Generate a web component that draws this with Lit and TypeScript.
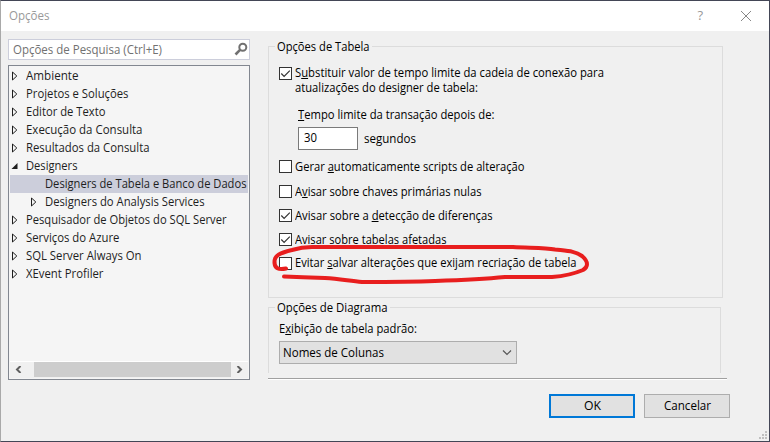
import { LitElement, html, css, svg, nothing } from "lit";
import { customElement, property, state } from "lit/decorators.js";
import { styleMap } from "lit/directives/style-map.js";

/** A single line of text condensed to a given advance width. */
@customElement("ui-label")
class UiLabel extends LitElement {
  @property() text = "";
  @property({ type: Number }) fit = 0;
  @state() private ratio = 1;
  static styles = css`
    :host { display: block; white-space: pre; }
    .run { display: inline-block; vertical-align: top; transform-origin: 0 0; }
    .key { text-decoration: underline; text-underline-offset: 1px; text-decoration-thickness: 1px; text-decoration-skip-ink: none; }
  `;
  firstUpdated() {
    const run = this.renderRoot.querySelector(".run") as HTMLElement;
    this.ratio = this.fit / run.getBoundingClientRect().width;
  }
  render() {
    const at = this.text.indexOf("_");
    const parts = at < 0 ? this.text : html`${this.text.slice(0, at)}<span class="key">${this.text[at + 1]}</span>${this.text.slice(at + 2)}`;
    return html`<span class="run" style=${styleMap({ transform: `scaleX(${this.ratio})` })}>${parts}</span>`;
  }
  updated() {
    this.style.width = this.fit + "px";
  }
}

@customElement("ui-check")
class UiCheck extends LitElement {
  @property() text = "";
  @property({ type: Number }) fit = 0;
  @property({ type: Boolean }) checked = false;
  @property({ type: Boolean }) raised = false;
  static styles = css`
    :host { display: flex; gap: 3px; height: 15px; }
    .box { box-sizing: border-box; flex: none; width: 13px; height: 13px; border: 1px solid #333; background: #fff; margin-top: 1px; }
    .raised { margin-top: -1px; }
    svg { display: block; }
  `;
  render() {
    return html`<span class="box">${this.checked
      ? html`<svg width="11" height="11" viewBox="0 0 11 11"><path d="M1.3 5.5 4.1 8.3 9.8 2.6" fill="none" stroke="#333" stroke-width="1.2"/></svg>`
      : nothing}</span><ui-label class=${this.raised ? "raised" : ""} .text=${this.text} .fit=${this.fit}></ui-label>`;
  }
}

type Node = { text: string; fit: number; mark: "closed" | "open" | "none"; child?: boolean; selected?: boolean };
const nodes: Node[] = [
  { text: "Ambiente", fit: 52.5, mark: "closed" },
  { text: "Projetos e Soluções", fit: 102.5, mark: "closed" },
  { text: "Editor de Texto", fit: 79.5, mark: "closed" },
  { text: "Execução da Consulta", fit: 116.5, mark: "closed" },
  { text: "Resultados da Consulta", fit: 123.5, mark: "closed" },
  { text: "Designers", fit: 51.5, mark: "open" },
  { text: "Designers de Tabela e Banco de Dados", fit: 201.5, mark: "none", child: true, selected: true },
  { text: "Designers do Analysis Services", fit: 159.5, mark: "closed", child: true },
  { text: "Pesquisador de Objetos do SQL Server", fit: 200.5, mark: "closed" },
  { text: "Serviços do Azure", fit: 93.5, mark: "closed" },
  { text: "SQL Server Always On", fit: 115.5, mark: "closed" },
  { text: "XEvent Profiler", fit: 77.5, mark: "closed" },
];

const marks = {
  closed: svg`<path d="M1.5 1 L5.8 5 L1.5 9 Z" fill="none" stroke="#1e1e1e"/>`,
  open: svg`<path d="M0.5 8 L6.5 2 L6.5 8 Z" fill="#1e1e1e"/>`,
  none: nothing,
};

@customElement("app-root")
class AppRoot extends LitElement {
  static styles = css`
    :host { display: block; width: 770px; height: 442px; font: 12px/15px "Open Sans", "Noto Sans", sans-serif; color: #000; }
    * { box-sizing: border-box; }
    svg { display: block; flex: none; }
    .window { position: relative; display: flex; flex-direction: column; width: 770px; height: 442px; overflow: hidden; background: #f0f0f0;
      border: 1px solid #434656; border-left-color: #a9a9a9; }
    .titlebar { display: flex; height: 30px; background: #fff; color: #999; padding: 7px 17px 0 8px; }
    .titlebar .close { margin: 2px 0 0 37px; }
    .help { margin-left: auto; font-size: 13px; }
    .main { display: flex; gap: 18px; padding: 8px 0 0 7px; height: 363px; }
    .side { display: flex; flex-direction: column; gap: 5px; width: 242px; }
    .search { display: flex; justify-content: space-between; height: 21px; border: 1px solid #cccedb; background: #fff; color: #717171; padding: 2px 1px 0 4px; }
    .tree { display: flex; flex-direction: column; height: 315px; border: 1px solid #828790; background: #f5f5f5; padding: 1px; color: #1e1e1e; }
    .row { display: flex; height: 18px; padding: 1px 0 0 1px; white-space: nowrap; }
    .row svg { margin: 3px 7px 0 0; }
    .row.child { padding-left: 20px; }
    .row.selected { background: #cccedb; }
    .scroll { display: flex; align-items: flex-start; height: 17px; margin-top: auto; background: #f0f0f0; border-top: 1px solid #fff; }
    .thumb { height: 15px; width: 197px; background: #cdcdcd; }
    .scroll .left { margin: 4px 12px 0 5px; }
    .scroll .right { margin: 4px 0 0 5px; }
    .page { width: 459px; padding-top: 7px; }
    .group { border: 1px solid #dcdcdc; width: 455px; height: 252px; padding: 0 0 0 10px; }
    .legend { width: max-content; background: #f0f0f0; padding: 0 2px; margin: -8px 0 0 -4px; }
    .first { margin-top: 12px; }
    .second { margin: -1px 0 0 16px; }
    .timeout { margin: 12px 0 0 19px; }
    .entry { display: flex; align-items: flex-start; gap: 6px; margin-top: 5px; }
    .input { width: 60px; height: 23px; background: #fff; border: 1px solid #7a7a7a; padding: 2px 5px; }
    .unit { padding-top: 4px; }
    .checks { display: grid; grid-template-rows: 25px 24px 24px 24px 15px; margin-top: 9px; }
    .diagram { width: 453px; height: 66px; border-bottom: 0; margin-top: 9px; }
    .caption { margin-top: 6px; }
    .combo { display: flex; justify-content: space-between; width: 238px; height: 23px; margin-top: 5px; border: 1px solid #adadad; background: #e1e1e1; padding: 3px 4px 0 3px; }
    .combo svg { margin-top: 3px; }
    .rule { width: 459px; height: 2px; background: #a0a0a0; border-bottom: 1px solid #fff; margin-top: 5px; }
    .actions { display: flex; gap: 9px; justify-content: flex-end; padding-right: 39px; }
    .button { display: flex; justify-content: center; width: 86px; height: 24px; border: 1px solid #adadad; background: #e1e1e1; padding-top: 3px; }
    .button.primary { border: 2px solid #0078d7; padding-top: 2px; }
    .grip { position: absolute; right: 2px; bottom: 2px; }
    .marker { position: absolute; left: -1px; top: -1px; pointer-events: none; }
    .edge { position: absolute; left: -1px; height: 1px; background: #9999a5; }
    .edge.top { top: -1px; width: 41px; }
    .edge.bottom { bottom: -1px; width: 39px; background: #a9a9a9; }
  `;
  render() {
    const label = (text: string, fit: number) => html`<ui-label .text=${text} .fit=${fit}></ui-label>`;
    const check = (text: string, fit: number, on: boolean, raised = false) =>
      html`<ui-check .text=${text} .fit=${fit} .checked=${on} .raised=${raised}></ui-check>`;
    return html`
      <div class="window">
        <div class="titlebar">
          ${label("Opções", 40.5)}
          <div class="help">?</div>
          <svg class="close" width="12" height="12" viewBox="0 0 12 12"><path d="M1 1 11 11M11 1 1 11" stroke="#888" fill="none"/></svg>
        </div>
        <div class="main">
          <div class="side">
            <div class="search">
              ${label("Opções de Pesquisa (Ctrl+E)", 149)}
              <svg width="14" height="14" viewBox="0 0 14 14"><circle cx="8.8" cy="5.2" r="3.5" fill="none" stroke="#717171" stroke-width="2"/><path d="M6.3 7.7 1.5 12.5" stroke="#717171" stroke-width="2.6"/></svg>
            </div>
            <div class="tree">
              ${nodes.map((n) => html`<div class="row ${n.child ? "child" : ""} ${n.selected ? "selected" : ""}">
                <svg width="8" height="10" viewBox="0 0 8 10">${marks[n.mark]}</svg>${label(n.text, n.fit)}
              </div>`)}
              <div class="scroll">
                <svg class="left" width="7" height="7" viewBox="0 0 7 7"><path d="M5.5 0 2 3.5 5.5 7" fill="none" stroke="#606060" stroke-width="2"/></svg>
                <div class="thumb"></div>
                <svg class="right" width="7" height="7" viewBox="0 0 7 7"><path d="M1.5 0 5 3.5 1.5 7" fill="none" stroke="#606060" stroke-width="2"/></svg>
              </div>
            </div>
          </div>
          <div class="page">
            <div class="group">
              <div class="legend">${label("Opções de Tabela", 92.5)}</div>
              <div class="first">${check("S_ubstituir valor de tempo limite da cadeia de conexão para", 309, true, true)}</div>
              <div class="second">${label("atualizações do designer de tabela:", 183)}</div>
              <div class="timeout">
                ${label("_Tempo limite da transação depois de:", 196.5)}
                <div class="entry"><div class="input">${label("30", 13)}</div><div class="unit">${label("segundos", 52)}</div></div>
              </div>
              <div class="checks">
                ${check("Gerar _automaticamente scripts de alteração", 229.5, false)}
                ${check("A_visar sobre chaves primárias nulas", 186.5, false)}
                ${check("Avisar sobre a _detecção de diferenças", 197.5, true)}
                ${check("Avisar sobre tabelas afetadas", 151.5, true)}
                ${check("Evitar _salvar alterações que exijam recriação de tabela", 281.5, false, true)}
              </div>
            </div>
            <div class="group diagram">
              <div class="legend">${label("Opções de Diagrama", 110.5)}</div>
              <div class="caption">${label("E_xibição de tabela padrão:", 138)}</div>
              <div class="combo">${label("Nomes de Colunas", 101)}
                <svg width="10" height="10" viewBox="0 0 10 10"><path d="M1 2.5 5 6.5 9 2.5" fill="none" stroke="#555" stroke-width="1.2"/></svg>
              </div>
            </div>
            <div class="rule"></div>
          </div>
        </div>
        <div class="actions">
          <div class="button primary">${label("OK", 17)}</div>
          <div class="button">${label("Cancelar", 47)}</div>
        </div>
        <svg class="grip" width="8" height="8" viewBox="0 0 8 8"><path d="M6 0h2v2h-2zM3 3h2v2h-2zM6 3h2v2h-2zM0 6h2v2h-2zM3 6h2v2h-2zM6 6h2v2h-2z" fill="#bfbfbf"/></svg>
        <svg class="marker" width="770" height="442" viewBox="0 0 770 442"><path d="M286 268.5 C278 270 275 268 274.5 263 C274 255 280 253 292 250 C300 247.5 304 247 312 247 L513 247 C530 248 545 247.5 555 249.5 C568 251 575 251 582 256 C589 262 588 267 583 270 C576 273 565 276 552 277 L505 277 C480 279.5 465 280 435 281 C410 282 385 282 362 282 C350 281 340 279 325 278 C308 277.5 300 277 284 276.5" fill="none" stroke="#e81e1e" stroke-width="4" stroke-linecap="round" stroke-linejoin="round"/></svg>
        <div class="edge top"></div><div class="edge bottom"></div>
      </div>`;
  }
}
